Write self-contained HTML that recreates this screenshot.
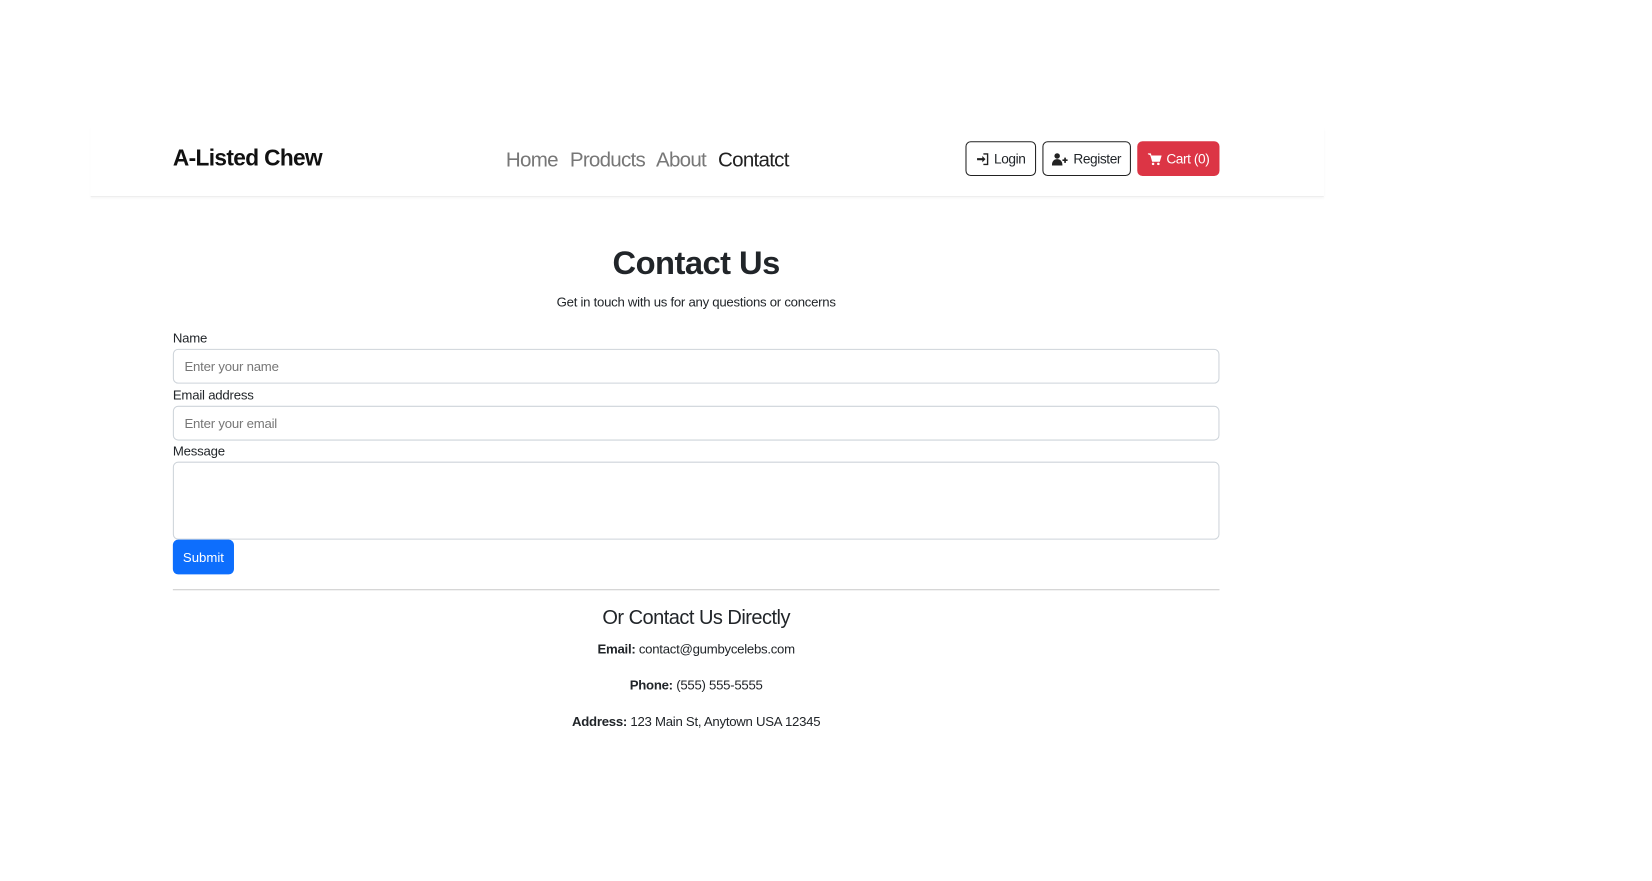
<!DOCTYPE html>
<html><head><meta charset="utf-8"><style>
*{box-sizing:border-box;margin:0;padding:0}
body{width:1652px;height:881px;background:#fff;font-family:"Liberation Sans",sans-serif;color:#212529;position:relative;overflow:hidden}
#w{position:absolute;left:0;top:0;width:1568px;height:836px;transform:scale(1.054);transform-origin:0 0}
.a{position:absolute}
.nav{left:86px;top:120px;width:1170px;height:67px;border-bottom:1px solid #eee;box-shadow:0 2px 2px rgba(0,0,0,0.03)}
.brand{left:164px;top:138px;font-size:21.5px;font-weight:bold;letter-spacing:-0.6px;color:#111}
.links{left:480px;top:141px;font-size:19.5px;color:#777;letter-spacing:-0.7px;word-spacing:1px}
.links b{font-weight:normal;color:#222}
.btn{top:134px;height:33px;border:1px solid #222;border-radius:5px;font-size:13px;display:flex;align-items:center;justify-content:center;gap:5px;letter-spacing:-0.4px}
h1{position:absolute;left:0;width:1321px;text-align:center;top:232px;font-size:31px;font-weight:bold;letter-spacing:-0.5px}
.sub{left:0;width:1321px;text-align:center;top:280px;font-size:12.5px;letter-spacing:-0.25px}
.lbl{left:164px;font-size:12.5px;letter-spacing:-0.2px}
.inp{left:164px;width:993px;border:1px solid #ced4da;border-radius:5px;font-size:12.5px;color:#777;padding-left:10px;display:flex;align-items:center;letter-spacing:-0.2px}
.c{left:0;width:1321px;text-align:center;font-size:12.5px;letter-spacing:-0.25px}
</style></head><body><div id="w">
<div class="a nav"></div>
<div class="a brand">A-Listed Chew</div>
<div class="a links">Home&nbsp; Products&nbsp; About&nbsp; <b>Contatct</b></div>
<div class="a btn" style="left:916px;width:67px"><svg width="12" height="12" viewBox="0 0 12 12"><path d="M1 5h5V3l3 3-3 3V7H1z" fill="#222"/><path d="M7 1h4v10H7" fill="none" stroke="#222" stroke-width="1.3"/></svg>Login</div>
<div class="a btn" style="left:989px;width:84px"><svg width="15" height="12" viewBox="0 0 15 12"><circle cx="5" cy="3" r="2.6" fill="#222"/><path d="M0 12c0-4 2-6 5-6s5 2 5 6z" fill="#222"/><path d="M10 7h5M12.5 4.5v5" stroke="#222" stroke-width="1.6"/></svg>Register</div>
<div class="a btn" style="left:1079px;width:78px;background:#dc3545;border-color:#dc3545;color:#fff"><svg width="13" height="12" viewBox="0 0 13 12"><path d="M0 1h2.5l2 7h6.5l1.5-5H3.5" fill="#fff" stroke="#fff" stroke-width="1"/><circle cx="5" cy="10.5" r="1.2" fill="#fff"/><circle cx="10" cy="10.5" r="1.2" fill="#fff"/></svg>Cart (0)</div>
<h1>Contact Us</h1>
<div class="a sub">Get in touch with us for any questions or concerns</div>
<div class="a lbl" style="top:314px">Name</div>
<div class="a inp" style="top:331px;height:33px">Enter your name</div>
<div class="a lbl" style="top:368px">Email address</div>
<div class="a inp" style="top:385px;height:33px">Enter your email</div>
<div class="a lbl" style="top:421px">Message</div>
<div class="a inp" style="top:438px;height:74px"></div>
<div class="a" style="left:164px;top:512px;width:58px;height:33px;background:#0d6efd;border-radius:5px;color:#fff;font-size:12.5px;display:flex;align-items:center;justify-content:center">Submit</div>
<div class="a" style="left:164px;top:559px;width:993px;height:1px;background:#ccc"></div>
<div class="a c" style="top:576px;font-size:19px;letter-spacing:-0.5px">Or Contact Us Directly</div>
<div class="a c" style="top:609px"><b>Email:</b> contact@gumbycelebs.com</div>
<div class="a c" style="top:643px"><b>Phone:</b> (555) 555-5555</div>
<div class="a c" style="top:678px"><b>Address:</b> 123 Main St, Anytown USA 12345</div>
</div></body></html>
